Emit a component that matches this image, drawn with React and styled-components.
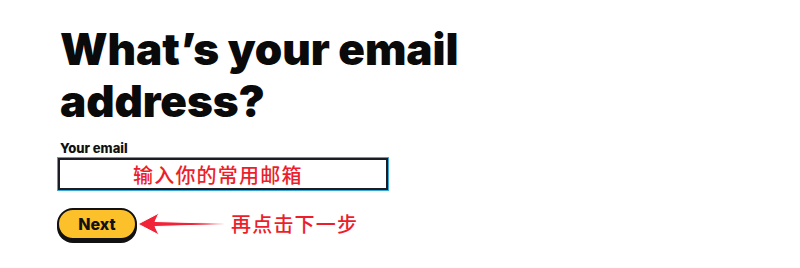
import styled, { createGlobalStyle } from "styled-components"

const GlobalStyle = createGlobalStyle`
html, body {
  margin: 0;
  background: #ffffff;
}
body {
  font-family: Inter, "Noto Sans", sans-serif;
  color: #0b0b0b;
}
`;

const Page = styled.div`
width: 800px;
height: 268px;
box-sizing: border-box;
padding: 23px 0 0 60px;
display: flex;
flex-direction: column;
align-items: flex-start;
`;

const Title = styled.h1`
margin: 0;
font-size: 44px;
line-height: 52px;
font-weight: 900;
letter-spacing: -0.1px;
color: #0a0a0a;
`;

const Label = styled.label`
margin-top: 13px;
font-size: 13px;
line-height: 16px;
font-weight: 800;
color: #111;
`;

const InputBox = styled.div`
margin: 2px 0 0 -2px;
width: 330px;
height: 32px;
box-sizing: border-box;
border: 2px solid #1c1c24;
box-shadow: 0 0 0 1px #35a9d9;
display: flex;
align-items: center;
padding-left: 73px;
`;

const Note = styled.span`
font-family: "Noto Sans CJK SC", sans-serif;
font-size: 20px;
font-weight: 500;
letter-spacing: 1.2px;
color: #ec1e2c;
text-shadow: 0 0 2px #fff, 0 0 2px #fff;
`;

const ActionRow = styled.div`
margin: 18px 0 0 -3px;
display: flex;
align-items: center;
`;

const NextButton = styled.button`
width: 80px;
height: 32px;
border-radius: 16px;
border: 2px solid #111;
background: #fcc02a;
box-shadow: 0 3px 0 #111;
font-family: Inter, sans-serif;
font-size: 16px;
font-weight: 800;
color: #111;
padding: 0;
cursor: pointer;
`;

const Pointer = styled.svg`
margin-left: 0;
display: block;
`;

const StepNote = styled(Note)`
margin-left: 6px;
margin-top: -2px;
`;

const App = () => {
    return (
        <>
        <GlobalStyle/>
        <Page>
            <Title>What’s your email<br/>address?</Title>
            <Label>Your email</Label>
            <InputBox>
                <Note>输入你的常用邮箱</Note>
            </InputBox>
            <ActionRow>
                <NextButton>Next</NextButton>
                <Pointer width="88" height="26" viewBox="0 0 88 26">
                    <path d="M1 13 L22 2 L18 10.5 L87 12.4 L87 13.6 L18 15.5 L22 24 Z"
                        fill="#f02338" stroke="#fff" strokeWidth="1" strokeLinejoin="round"/>
                </Pointer>
                <StepNote>再点击下一步</StepNote>
            </ActionRow>
        </Page>
        </>
    )
}

export default App
